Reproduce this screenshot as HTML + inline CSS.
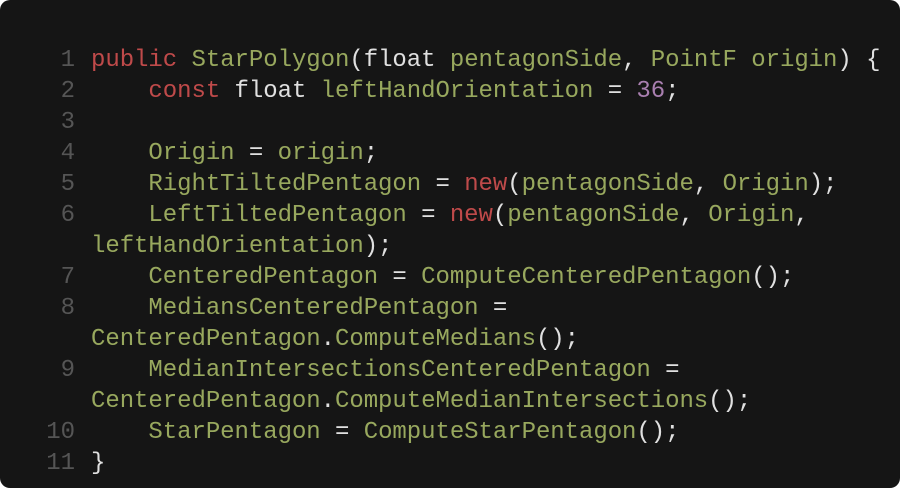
<!DOCTYPE html>
<html><head><style>
html,body{margin:0;padding:0;background:#fff;}
.w{width:900px;height:488px;background:#151515;border-radius:10px;position:relative;overflow:hidden;}
.c{position:absolute;left:0;top:45px;width:900px;font-family:"Liberation Mono",monospace;font-size:24px;letter-spacing:-0.05px;line-height:31px;color:#e0e0e0;}
.l{height:31px;position:relative;}
.n{position:absolute;left:0;width:75px;text-align:right;color:#555;}
.t{position:absolute;left:91px;white-space:pre;}
.k{color:#bf4a4a}.g{color:#98a85e}.p{color:#a97fb0}
</style></head><body><div class="w"><div class="c">
<div class="l"><span class="n">1</span><span class="t"><span class="k">public</span> <span class="g">StarPolygon</span>(float <span class="g">pentagonSide</span>, <span class="g">PointF origin</span>) {</span></div>
<div class="l"><span class="n">2</span><span class="t">    <span class="k">const</span> float <span class="g">leftHandOrientation</span> = <span class="p">36</span>;</span></div>
<div class="l"><span class="n">3</span></div>
<div class="l"><span class="n">4</span><span class="t">    <span class="g">Origin</span> = <span class="g">origin</span>;</span></div>
<div class="l"><span class="n">5</span><span class="t">    <span class="g">RightTiltedPentagon</span> = <span class="k">new</span>(<span class="g">pentagonSide</span>, <span class="g">Origin</span>);</span></div>
<div class="l"><span class="n">6</span><span class="t">    <span class="g">LeftTiltedPentagon</span> = <span class="k">new</span>(<span class="g">pentagonSide</span>, <span class="g">Origin</span>,</span></div>
<div class="l"><span class="t"><span class="g">leftHandOrientation</span>);</span></div>
<div class="l"><span class="n">7</span><span class="t">    <span class="g">CenteredPentagon</span> = <span class="g">ComputeCenteredPentagon</span>();</span></div>
<div class="l"><span class="n">8</span><span class="t">    <span class="g">MediansCenteredPentagon</span> =</span></div>
<div class="l"><span class="t"><span class="g">CenteredPentagon</span>.<span class="g">ComputeMedians</span>();</span></div>
<div class="l"><span class="n">9</span><span class="t">    <span class="g">MedianIntersectionsCenteredPentagon</span> =</span></div>
<div class="l"><span class="t"><span class="g">CenteredPentagon</span>.<span class="g">ComputeMedianIntersections</span>();</span></div>
<div class="l"><span class="n">10</span><span class="t">    <span class="g">StarPentagon</span> = <span class="g">ComputeStarPentagon</span>();</span></div>
<div class="l"><span class="n">11</span><span class="t">}</span></div>
</div></div></body></html>
